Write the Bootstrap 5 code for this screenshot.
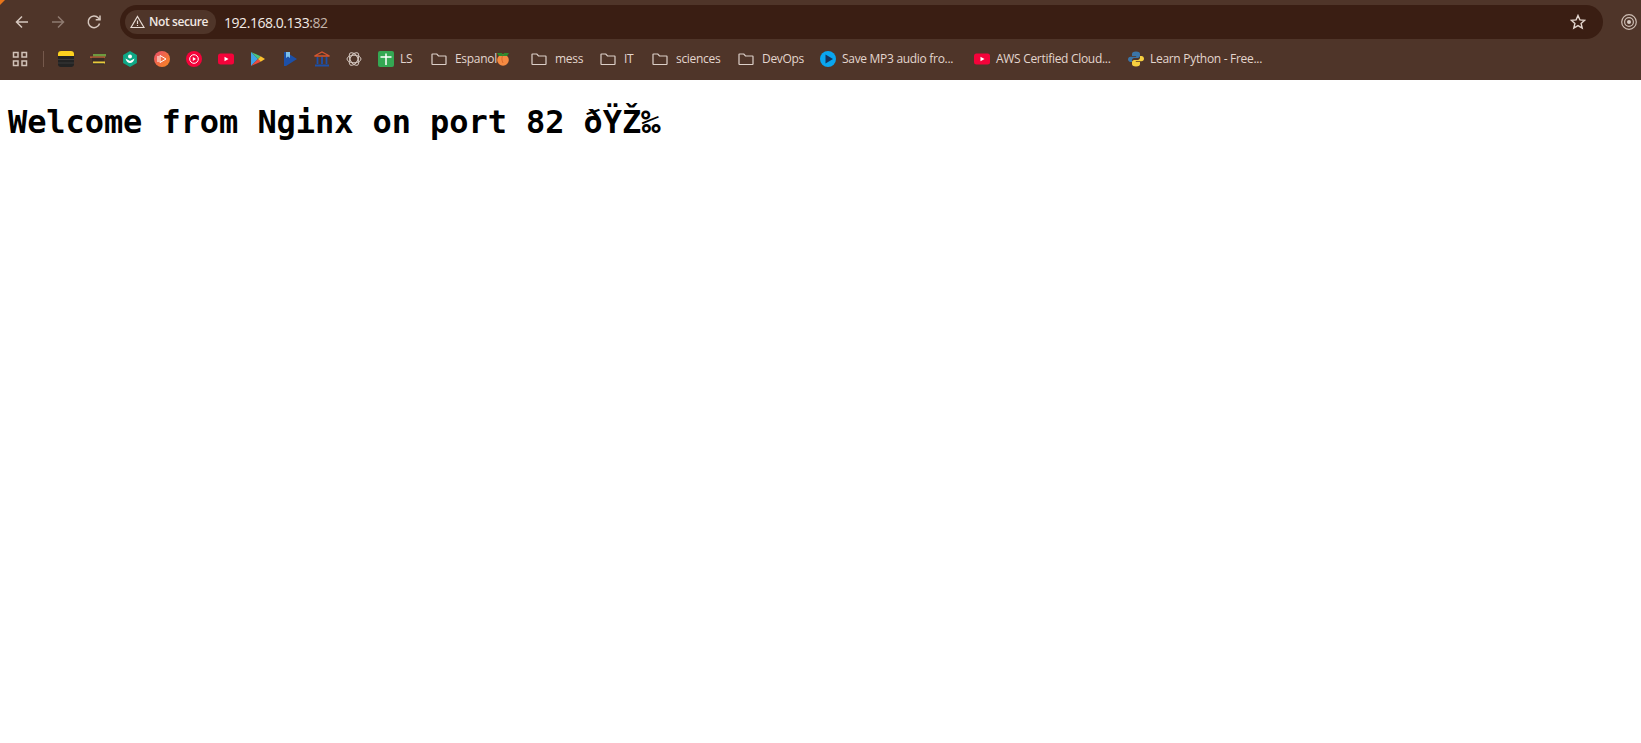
<!DOCTYPE html>
<html lang="en">
<head>
<meta charset="UTF-8">
<title>192.168.0.133:82</title>
<link href="https://cdn.jsdelivr.net/npm/bootstrap@5.3.3/dist/css/bootstrap.min.css" rel="stylesheet">
<style>
  body { background: #fff; color: #000; font-family: "Open Sans", "Noto Sans", sans-serif; }
  .browser-top { background: #4f3529; height: 80px; position: relative; color: #e8dcd5; }
  .tab-corner { position: absolute; left: 0; top: 0; width: 5px; height: 5px; background: #e8751a; clip-path: polygon(0 0, 100% 0, 0 100%); }
  .tool-row { height: 40px; padding-top: 5px; padding-left: 4px; }
  .tool-btn { width: 36px; height: 34px; flex: none; }
  .omni { background: #3a1e13; height: 34px; width: 1483px; margin-left: 8px; border-radius: 17px; padding: 0 17px 0 5px; flex: none; }
  .chip { background: #4f3529; height: 24px; border-radius: 12px; width: 91px; padding-left: 5px; gap: 4px; font-size: 12px; font-weight: 600; color: #f1e8e3; white-space: nowrap; letter-spacing: -.4px; }
  .url-text { font-size: 14px; margin-left: 8px; color: #f3ebe6; letter-spacing: -.45px; }
  .url-port { color: #c4b4aa; }
  .profile-btn { margin-left: 8px; }
  .bm-row { height: 40px; padding-left: 12px; padding-bottom: 2px; font-size: 12px; color: #e3d6ce; white-space: nowrap; letter-spacing: -.3px; }
  .bm-item { padding: 0 8px; gap: 6px; flex: none; }
  .bm-folder { gap: 8px; }
  .bm-apps { padding: 0; width: 16px; }
  .bm-sep { width: 1px; height: 16px; background: #75594c; margin: 0 6px 0 15px; flex: none; }
  .bm-item svg { flex: none; display: block; }
  .w-ls { width: 15px; }
  .w-espanol { width: 41px; }
  .w-peach { margin-left: -8px; margin-right: 5px; }
  .w-mess { width: 29px; }
  .w-it { width: 12px; }
  .w-sci { width: 46px; }
  .w-dev { width: 42px; }
  .w-mp3 { width: 116px; }
  .w-aws { width: 116px; }
  .w-py { width: 113px; }
  .page-title { font-family: "DejaVu Sans Mono", "Liberation Mono", monospace; font-weight: 700; font-size: 32px; line-height: 38px; margin: 23px 0 0 8px; letter-spacing: -.08px; white-space: nowrap; }
</style>
</head>
<body>

<div class="browser-top">
  <div class="tab-corner"></div>

  <!-- toolbar -->
  <div class="tool-row d-flex align-items-start">
    <div class="tool-btn d-flex align-items-center justify-content-center">
      <svg width="16" height="16" viewBox="0 0 16 16" fill="none" stroke="#d6c7be" stroke-width="1.5"><path d="M14 8H2.500M8 2.500 2.500 8 8 13.500"/></svg>
    </div>
    <div class="tool-btn d-flex align-items-center justify-content-center">
      <svg width="16" height="16" viewBox="0 0 16 16" fill="none" stroke="#8f7b70" stroke-width="1.5"><path d="M2 8h11.500M8 2.500 13.500 8 8 13.500"/></svg>
    </div>
    <div class="tool-btn d-flex align-items-center justify-content-center">
      <svg width="16" height="16" viewBox="0 0 16 16" fill="none" stroke="#d6c7be" stroke-width="1.5"><path d="M13.600 9.500A5.800 5.800 0 1 1 12.400 4L14 5.600"/><path d="M14 1.500v4.300H9.700"/></svg>
    </div>
    <div class="omni d-flex align-items-center">
      <div class="chip d-flex align-items-center">
        <svg width="15" height="14" viewBox="0 0 15 14" fill="none" stroke="#e8dcd5" stroke-width="1.200"><path d="M7.500 1.500 14 12.500H1z"/><path d="M7.500 5.500V9M7.500 10v1"/></svg>
        <span>Not secure</span>
      </div>
      <span class="url-text">192.168.0.133<span class="url-port">:82</span></span>
      <svg class="ms-auto" width="16" height="16" viewBox="0 0 16 16" fill="none" stroke="#e3d6ce" stroke-width="1.400"><path d="M8 1.500l1.900 4.400 4.800.4-3.600 3.100 1.100 4.700L8 11.600l-4.200 2.500 1.100-4.700L1.300 6.300l4.800-.4z"/></svg>
    </div>
    <div class="tool-btn profile-btn d-flex align-items-center justify-content-center">
      <svg width="16" height="16" viewBox="0 0 16 16" fill="none" stroke="#cdbdb3"><circle cx="8" cy="8" r="7.300" stroke-width="1.200"/><circle cx="8" cy="8" r="4.400" stroke-width="1.200"/><circle cx="8" cy="8" r="2" fill="#d8cbc3" stroke="none"/></svg>
    </div>
  </div>

  <!-- bookmarks bar -->
  <div class="bm-row d-flex align-items-center">
    <div class="bm-item bm-apps d-flex">
      <svg width="16" height="16" viewBox="0 0 16 16" fill="none" stroke="#d2c2b8" stroke-width="1.500"><rect x="1.500" y="1.500" width="4.500" height="4.500"/><rect x="10" y="1.500" width="4.500" height="4.500"/><rect x="1.500" y="10" width="4.500" height="4.500"/><rect x="10" y="10" width="4.500" height="4.500"/></svg>
    </div>
    <div class="bm-sep"></div>

    <div class="bm-item d-flex align-items-center">
      <svg width="16" height="16" viewBox="0 0 16 16"><rect width="16" height="16" rx="3" fill="#232323"/><path d="M0 5V3a3 3 0 0 1 3-3h10a3 3 0 0 1 3 3v2z" fill="#fdd21f"/><path d="M0 8.500h16M0 12h16" stroke="#3b3b3b"/></svg>
    </div>
    <div class="bm-item d-flex align-items-center">
      <svg width="16" height="16" viewBox="0 0 16 16"><rect x="3" y="3" width="13" height="2.500" fill="#6d9a3f"/><rect y="5.500" width="15" height="1.300" fill="#c8643a"/><rect x="2" y="6.800" width="12" height="3.700" fill="#3a2c26"/><rect x="3" y="10.500" width="12" height="2" fill="#e8c93a"/><rect x="3" y="12.500" width="11" height="1" fill="#2f2f2f"/></svg>
    </div>
    <div class="bm-item d-flex align-items-center">
      <svg width="16" height="16" viewBox="0 0 16 16"><path d="M8 0l6.900 4v8L8 16l-6.900-4V4z" fill="#0fa886"/><circle cx="8" cy="5.500" r="2" fill="#fff"/><path d="M3.500 7.500C4.500 11 6 12 8 12s3.500-1 4.500-4.500L8 10z" fill="#fff"/></svg>
    </div>
    <div class="bm-item d-flex align-items-center">
      <svg width="16" height="16" viewBox="0 0 16 16"><defs><linearGradient id="grad-music" x1="0" y1="0" x2="1" y2="1"><stop offset="0" stop-color="#ea4d6b"/><stop offset="1" stop-color="#f98a1e"/></linearGradient></defs><circle cx="8" cy="8" r="8" fill="url(#grad-music)"/><path d="M6 4.500 12 8l-6 3.500zM4 5v6" fill="none" stroke="#fff"/></svg>
    </div>
    <div class="bm-item d-flex align-items-center">
      <svg width="16" height="16" viewBox="0 0 16 16"><circle cx="8" cy="8" r="8" fill="#f4033a"/><circle cx="8" cy="8" r="4.300" fill="none" stroke="#fff"/><path d="M6.800 6v4L10 8z" fill="#fff"/></svg>
    </div>
    <div class="bm-item d-flex align-items-center">
      <svg width="16" height="16" viewBox="0 0 16 16"><rect y="2.500" width="16" height="11" rx="2.500" fill="#f4033a"/><path d="M6.500 5.800v4.400L10.500 8z" fill="#fff"/></svg>
    </div>
    <div class="bm-item d-flex align-items-center">
      <svg width="16" height="16" viewBox="0 0 16 16"><path d="M1 1v14l7-7z" fill="#3fa3e8"/><path d="M1 1l7 7 2.700-2.700z" fill="#4cc47b"/><path d="M1 15l7-7 2.700 2.700z" fill="#ec4a3d"/><path d="M10.700 5.300 15 8l-4.300 2.700L8 8z" fill="#fbc02d"/></svg>
    </div>
    <div class="bm-item d-flex align-items-center">
      <svg width="16" height="16" viewBox="0 0 16 16"><path d="M2 1h2v14H2zM4 1l11 7-11 7z" fill="#1d50a8"/><path d="M4 1h4v6L6 5.500 4 7z" fill="#7cc0ea"/></svg>
    </div>
    <div class="bm-item d-flex align-items-center">
      <svg width="16" height="16" viewBox="0 0 16 16"><path d="M.5 5 8 1l7.500 4z" fill="none" stroke="#d4552f" stroke-width="1.300"/><path d="M3.500 6v7M8 6v7M12.500 6v7M1 14.500h14" stroke="#1d50a8" stroke-width="1.800"/></svg>
    </div>
    <div class="bm-item d-flex align-items-center">
      <svg width="16" height="16" viewBox="0 0 16 16" fill="none" stroke="#d5c8c0" stroke-width="1"><ellipse cx="8" cy="8" rx="7" ry="3.800"/><ellipse cx="8" cy="8" rx="7" ry="3.800" transform="rotate(60 8 8)"/><ellipse cx="8" cy="8" rx="7" ry="3.800" transform="rotate(120 8 8)"/></svg>
    </div>
    <div class="bm-item d-flex align-items-center">
      <svg width="16" height="16" viewBox="0 0 16 16"><rect width="16" height="16" rx="2" fill="#34a853"/><path d="M2.500 6h11M8 2.500V14" stroke="#fff" stroke-width="1.500"/></svg>
      <span class="w-ls">LS</span>
    </div>

    <div class="bm-item bm-folder d-flex align-items-center">
      <svg width="16" height="16" viewBox="0 0 16 16" fill="none" stroke="#dccfc8" stroke-width="1.200"><path d="M1 3.500a.5.500 0 0 1 .5-.5h4.300l1.700 2h7a.5.500 0 0 1 .5.500V13a.5.500 0 0 1-.5.500h-13A.5.500 0 0 1 1 13z"/></svg>
      <span class="w-espanol">Espanol</span>
      <svg class="w-peach" width="14" height="14" viewBox="0 0 14 14"><circle cx="7" cy="8" r="5.800" fill="#f58a42"/><path d="M7 3c-1.500 2.500-1.500 5 0 8" fill="none" stroke="#d9682a"/><path d="M1 1h5l1 2 1-2h5l-2 3H3z" fill="#2f8a2f"/></svg>
    </div>
    <div class="bm-item bm-folder d-flex align-items-center">
      <svg width="16" height="16" viewBox="0 0 16 16" fill="none" stroke="#dccfc8" stroke-width="1.200"><path d="M1 3.500a.5.500 0 0 1 .5-.5h4.300l1.700 2h7a.5.500 0 0 1 .5.500V13a.5.500 0 0 1-.5.500h-13A.5.500 0 0 1 1 13z"/></svg>
      <span class="w-mess">mess</span>
    </div>
    <div class="bm-item bm-folder d-flex align-items-center">
      <svg width="16" height="16" viewBox="0 0 16 16" fill="none" stroke="#dccfc8" stroke-width="1.200"><path d="M1 3.500a.5.500 0 0 1 .5-.5h4.300l1.700 2h7a.5.500 0 0 1 .5.500V13a.5.500 0 0 1-.5.500h-13A.5.500 0 0 1 1 13z"/></svg>
      <span class="w-it">IT</span>
    </div>
    <div class="bm-item bm-folder d-flex align-items-center">
      <svg width="16" height="16" viewBox="0 0 16 16" fill="none" stroke="#dccfc8" stroke-width="1.200"><path d="M1 3.500a.5.500 0 0 1 .5-.5h4.300l1.700 2h7a.5.500 0 0 1 .5.500V13a.5.500 0 0 1-.5.500h-13A.5.500 0 0 1 1 13z"/></svg>
      <span class="w-sci">sciences</span>
    </div>
    <div class="bm-item bm-folder d-flex align-items-center">
      <svg width="16" height="16" viewBox="0 0 16 16" fill="none" stroke="#dccfc8" stroke-width="1.200"><path d="M1 3.500a.5.500 0 0 1 .5-.5h4.300l1.700 2h7a.5.500 0 0 1 .5.500V13a.5.500 0 0 1-.5.500h-13A.5.500 0 0 1 1 13z"/></svg>
      <span class="w-dev">DevOps</span>
    </div>

    <div class="bm-item d-flex align-items-center">
      <svg width="16" height="16" viewBox="0 0 16 16"><circle cx="8" cy="8" r="8" fill="#0aa6f0"/><path d="M5.500 3.500v9L13 8z" fill="#16335c"/></svg>
      <span class="w-mp3">Save MP3 audio fro...</span>
    </div>
    <div class="bm-item d-flex align-items-center">
      <svg width="16" height="16" viewBox="0 0 16 16"><rect y="2.500" width="16" height="11" rx="2.500" fill="#f4033a"/><path d="M6.500 5.800v4.400L10.500 8z" fill="#fff"/></svg>
      <span class="w-aws">AWS Certified Cloud...</span>
    </div>
    <div class="bm-item d-flex align-items-center">
      <svg width="16" height="16" viewBox="0 0 16 16"><path d="M8 .5c-3 0-4 1-4 2.500V5h4.200v.7H2.500C1 5.700 0 7 0 8.300s1 2.700 2.500 2.700H4V9.200C4 8 5 7 6.200 7h3.600C11 7 12 6 12 4.800V3C12 1.500 11 .5 8 .5z" fill="#3b75a8"/><path d="M8 15.500c3 0 4-1 4-2.500v-2H7.800v-.7h5.700c1.500 0 2.500-1.300 2.500-2.600S15 5 13.500 5H12v1.800C12 8 11 9 9.800 9H6.200C5 9 4 10 4 11.200V13c0 1.500 1 2.500 4 2.500z" fill="#f7cf3f"/></svg>
      <span class="w-py">Learn Python - Free...</span>
    </div>
  </div>
</div>

<h1 class="page-title">Welcome from Nginx on port 82 ðŸŽ‰</h1>

<script src="https://cdn.jsdelivr.net/npm/bootstrap@5.3.3/dist/js/bootstrap.bundle.min.js"></script>
</body>
</html>
